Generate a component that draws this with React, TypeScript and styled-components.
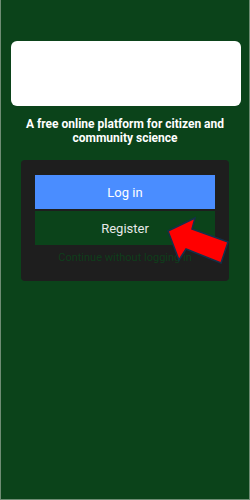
import styled, { createGlobalStyle } from "styled-components";

const GlobalStyle = createGlobalStyle`
  html, body {
    margin: 0;
    padding: 0;
    background: #0b431a;
  }
  * {
    box-sizing: border-box;
  }
`;

const Screen = styled.div`
  position: relative;
  width: 250px;
  height: 500px;
  display: flex;
  flex-direction: column;
  align-items: center;
  padding-top: 41px;
  background: #0b431a;
  border: 1px solid #6f8c74;
  border-top: none;
  font-family: Roboto, "Liberation Sans", Arial, sans-serif;
`;

const LogoBox = styled.div`
  width: 230px;
  height: 65px;
  margin-left: 1px;
  background: #ffffff;
  border-radius: 6px;
`;

const Tagline = styled.p`
  margin: 11px 0 0;
  width: 220px;
  color: #ffffff;
  font-size: 12px;
  font-weight: 700;
  line-height: 14px;
  text-align: center;
`;

const Card = styled.div`
  margin-top: 15px;
  width: 208px;
  display: flex;
  flex-direction: column;
  gap: 2px;
  padding: 15px 14px 17px;
  background: #1e1e1e;
  border-radius: 4px;
`;

const Button = styled.button<{ $primary?: boolean }>`
  height: 34px;
  border: none;
  border-radius: 0;
  background: ${(p) => (p.$primary ? "#4a8dff" : "#0b431a")};
  color: ${(p) => (p.$primary ? "#ffffff" : "#e8e8e8")};
  font-family: inherit;
  font-size: 13px;
  cursor: pointer;
`;

const SkipLink = styled.div`
  margin-top: 4px;
  text-align: center;
  color: #0f3d1b;
  font-size: 11px;
  line-height: 13px;
`;

const Arrow = styled.svg`
  position: absolute;
  left: 0;
  top: 0;
  width: 250px;
  height: 500px;
  pointer-events: none;
`;

export default function App() {
  return (
    <>
      <GlobalStyle />
      <Screen>
        <LogoBox />
        <Tagline>A free online platform for citizen and community science</Tagline>
        <Card>
          <Button $primary>Log in</Button>
          <Button>Register</Button>
          <SkipLink>Continue without logging in</SkipLink>
        </Card>
        <Arrow viewBox="0 0 250 500">
          <polygon
            points="167,231 194,218 191,229 227,242 220,263 185,249 178,260"
            fill="#ff0000"
            stroke="#14304a"
            strokeWidth="1.5"
            strokeLinejoin="miter"
          />
        </Arrow>
      </Screen>
    </>
  );
}
